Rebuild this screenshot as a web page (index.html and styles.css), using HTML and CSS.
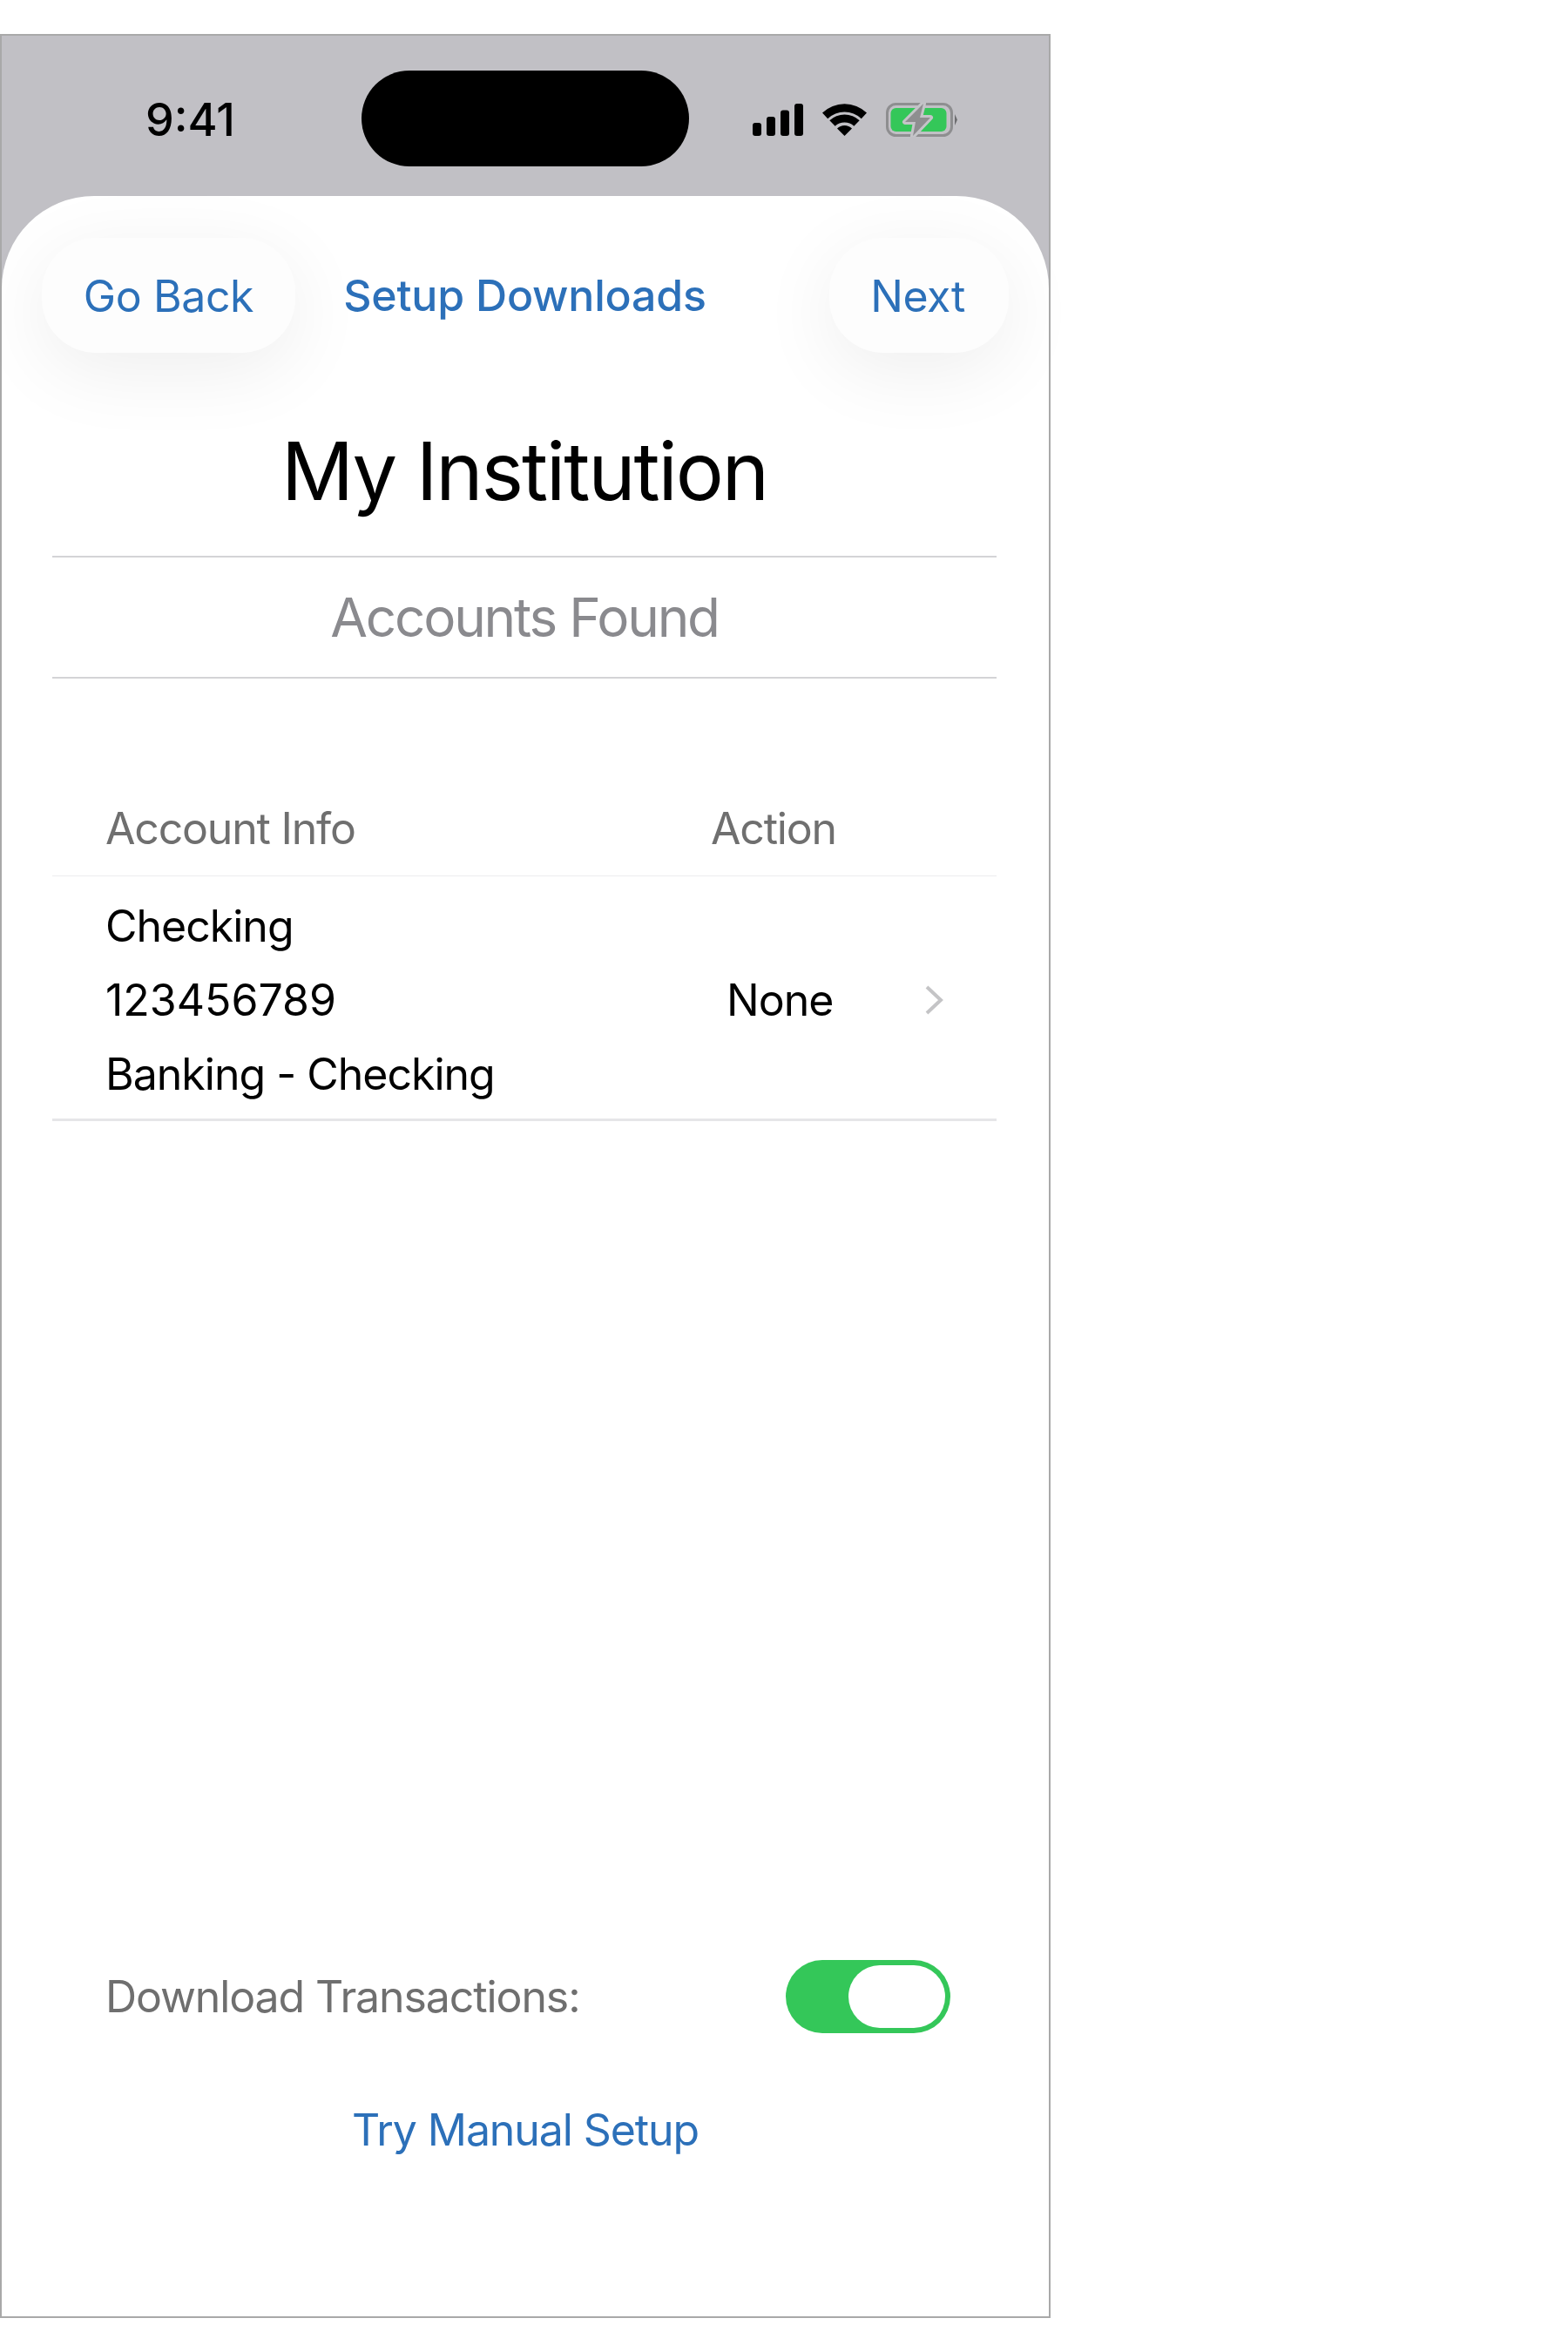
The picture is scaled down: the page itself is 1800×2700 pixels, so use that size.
FILE: index.html
```html
<!DOCTYPE html>
<html lang="en">
<head>
  <meta charset="UTF-8">
  <title>Setup Downloads</title>
  <link rel="stylesheet" href="styles.css">
</head>
<body>
  <div class="phone">
    <div class="status-bar">
      <span class="time">9:41</span>
      <div class="island"></div>
      <div class="status-icons">
        <svg class="icon-signal" viewBox="0 0 58 37" width="58" height="37">
          <rect x="0" y="22" width="10" height="15" rx="3"/>
          <rect x="16" y="15" width="10" height="22" rx="3"/>
          <rect x="32" y="7.500" width="10" height="29.500" rx="3"/>
          <rect x="48" y="0" width="10" height="37" rx="3"/>
        </svg>
        <svg class="icon-wifi" viewBox="0 0 51 37" width="51" height="37">
          <path d="M0 10.500A37 37 0 0 1 51 10.500L44.800 17.200A28 28 0 0 0 6.200 17.200Z"/>
          <path d="M8.300 19.300A25 25 0 0 1 42.700 19.300L36.300 25.700A16 16 0 0 0 14.700 25.700Z"/>
          <path d="M17 28.500A12 12 0 0 1 34 28.500L25.500 37Z"/>
        </svg>
        <svg class="icon-battery" viewBox="0 0 82 39" width="82" height="39">
          <rect x="1.500" y="1.500" width="74" height="36" rx="10" fill="none" stroke="#8e8e90" stroke-width="3"/>
          <rect x="5.500" y="6" width="64" height="27" rx="6" fill="#34c759"/>
          <path d="M79 13L82 19.500L79 26Z" fill="#6d6d70"/>
          <path d="M43 1L22 22H34L31 38L51 17H39Z" fill="#8e8e90" stroke="#c4c4c8" stroke-width="6" stroke-linejoin="round" paint-order="stroke"/>
        </svg>
      </div>
    </div>

    <main class="sheet">
      <nav class="top-nav">
        <a class="pill-button pill-left">Go Back</a>
        <span class="nav-title">Setup Downloads</span>
        <a class="pill-button pill-right">Next</a>
      </nav>

      <h1 class="institution">My Institution</h1>
      <h2 class="section-title">Accounts Found</h2>

      <div class="accounts-table">
        <div class="table-row table-head">
          <span>Account Info</span>
          <span>Action</span>
        </div>
        <div class="table-row account-row">
          <div class="account-info">
            <span>Checking</span>
            <span class="account-number">123456789</span>
            <span>Banking - Checking</span>
          </div>
          <span class="account-action">None</span>
          <svg class="chevron" viewBox="0 0 22 36" width="22" height="36">
            <path d="M3 3L19 18L3 33" fill="none" stroke="#c4c4c6" stroke-width="4"/>
          </svg>
        </div>
      </div>

      <div class="sheet-footer">
        <div class="download-row">
          <span>Download Transactions:</span>
          <div class="toggle"><div class="toggle-knob"></div></div>
        </div>
        <a class="manual-link">Try Manual Setup</a>
      </div>
    </main>
  </div>
</body>
</html>
```

FILE: styles.css
```css
:root {
  --link-color: #2c70b9;
  --line-color: #d4d4d6;
  --green: #34c759;
}

* {
  box-sizing: border-box;
}

body {
  margin: 0;
  background: white;
  font-family: Inter, "Liberation Sans", sans-serif;
  color: black;
}

.phone {
  width: 1206px;
  height: 2622px;
  margin-top: 39px;
  border: 2px solid #a9a9a9;
  background: #c1c0c5;
  display: flex;
  flex-direction: column;
}

/* status bar */
.status-bar {
  height: 184px;
  flex-shrink: 0;
  display: grid;
  grid-template-columns: 413px 376px 1fr;
  padding-top: 40px;
  align-items: start;
}

.time {
  font-size: 52px;
  font-weight: 500;
  line-height: 113px;
  padding-left: 165px;
}

.island {
  height: 110px;
  border-radius: 55px;
  background: black;
}

.status-icons {
  display: flex;
  align-items: center;
  gap: 22px;
  padding: 37px 0 0 73px;
}

/* white sheet */
.sheet {
  flex: 1;
  background: white;
  border-radius: 106px 106px 0 0;
  display: flex;
  flex-direction: column;
}

.top-nav {
  display: grid;
  grid-template-columns: 1fr auto 1fr;
  align-items: center;
  padding: 48px 46px 0 45px;
}

.pill-button {
  height: 132px;
  border-radius: 62px;
  background: #fdfdfd;
  box-shadow: 0 20px 90px rgba(0, 0, 0, 0.07);
  color: var(--link-color);
  font-size: 50px;
  letter-spacing: -0.4px;
  line-height: 134px;
  text-align: center;
}

.pill-left {
  justify-self: start;
  width: 291px;
  margin-left: 1px;
}

.pill-right {
  justify-self: end;
  width: 206px;
  padding-right: 3px;
}

.nav-title {
  color: var(--link-color);
  font-size: 50px;
  font-weight: 500;
  letter-spacing: -0.2px;
}

.institution {
  margin: 82px 60px 0 58px;
  padding-bottom: 43px;
  border-bottom: 2px solid var(--line-color);
  font-size: 92px;
  font-weight: 400;
  letter-spacing: -2.1px;
  line-height: 108px;
  text-align: center;
}

.section-title {
  margin: 0 60px 0 58px;
  height: 139px;
  border-bottom: 2px solid var(--line-color);
  color: #8a8a8e;
  font-size: 62px;
  font-weight: 400;
  letter-spacing: -2.2px;
  line-height: 137px;
  text-align: center;
}

.accounts-table {
  margin: 0 60px 0 58px;
  padding-top: 120px;
}

.table-row {
  display: grid;
  grid-template-columns: 695px 1fr;
  padding-left: 61px;
}

.table-head {
  height: 107px;
  border-bottom: 1px solid #ececee;
  color: #6f6f6f;
  font-size: 50px;
  letter-spacing: -1.2px;
  line-height: 104px;
}

.account-row {
  grid-template-columns: 713px 227px 1fr;
  align-items: center;
  height: 281px;
  padding-top: 6px;
  border-bottom: 3px solid #e6e6e8;
  font-size: 50px;
  letter-spacing: -1px;
}

.account-number {
  letter-spacing: 0;
}

.account-info {
  display: flex;
  flex-direction: column;
  line-height: 85px;
}

.chevron {
  display: block;
}

/* bottom of the sheet */
.sheet-footer {
  margin-top: auto;
  padding-bottom: 184px;
}

.download-row {
  display: flex;
  align-items: center;
  justify-content: space-between;
  padding: 0 113px 0 119px;
  color: #6f6f6f;
  font-size: 50px;
  letter-spacing: -1.1px;
}

.toggle {
  width: 189px;
  height: 84px;
  padding: 6px;
  border-radius: 42px;
  background: var(--green);
  display: flex;
  justify-content: flex-end;
}

.toggle-knob {
  width: 111px;
  height: 72px;
  border-radius: 36px;
  background: white;
}

.manual-link {
  display: block;
  margin-top: 81px;
  color: var(--link-color);
  font-size: 50px;
  letter-spacing: -1.1px;
  line-height: 60px;
  text-align: center;
}
```
